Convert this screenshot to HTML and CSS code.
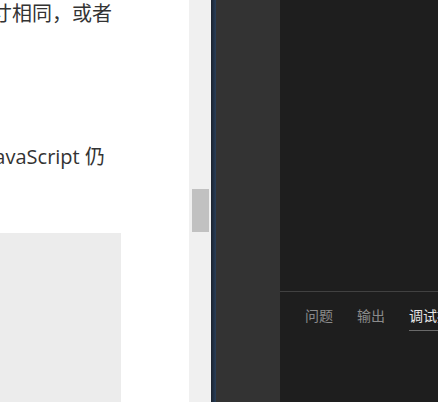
FILE: index.html
```html
<!DOCTYPE html>
<html lang="zh">
<head>
<meta charset="utf-8">
<link rel="stylesheet" href="styles.css">
</head>
<body>
<div class="app">
  <div class="doc">
    <p class="line line-1">尺寸相同，或者</p>
    <p class="line line-2">JavaScript 仍</p>
    <div class="code-box"></div>
  </div>
  <div class="scrollbar"><div class="thumb"></div></div>
  <div class="divider"></div>
  <div class="activity"></div>
  <div class="editor">
    <div class="editor-area"></div>
    <div class="panel">
      <div class="tabs">
        <span class="tab">问题</span>
        <span class="tab">输出</span>
        <span class="tab active">调试控制台</span>
      </div>
    </div>
  </div>
</div>
</body>
</html>
```

FILE: styles.css
```css
html, body {
  margin: 0;
  padding: 0;
  width: 438px;
  height: 402px;
  overflow: hidden;
}
.app {
  display: flex;
  height: 402px;
  width: 438px;
}
.doc {
  width: 189px;
  flex: none;
  background: #ffffff;
  overflow: hidden;
  display: flex;
  flex-direction: column;
  font-family: "Open Sans", "Noto Sans CJK SC", sans-serif;
  font-size: 20px;
  color: #333333;
}
.line {
  margin: 0;
  white-space: nowrap;
  line-height: 28px;
}
.line-1 {
  margin-left: -28px;
  margin-top: 0;
}
.line-2 {
  margin-left: -11px;
  margin-top: 115px;
}
.code-box {
  margin-top: 62px;
  width: 121px;
  flex: 1;
  background: #ececec;
}
.scrollbar {
  width: 22px;
  flex: none;
  background: #f0f0f0;
  display: flex;
  flex-direction: column;
  align-items: center;
}
.thumb {
  margin-top: 189px;
  width: 17px;
  height: 43px;
  background: #c1c1c1;
}
.divider {
  width: 5px;
  flex: none;
  background: linear-gradient(to right, #1b222c, #23344a 60%, #2a3f58);
}
.activity {
  width: 64px;
  flex: none;
  background: #333333;
}
.editor {
  flex: 1;
  background: #1e1e1e;
  display: flex;
  flex-direction: column;
  overflow: hidden;
}
.editor-area {
  height: 291px;
  flex: none;
}
.panel {
  flex: 1;
  border-top: 1px solid #414141;
}
.tabs {
  display: flex;
  gap: 24px;
  padding: 14px 0 0 25px;
  font-family: "Noto Sans CJK SC", sans-serif;
  font-size: 14px;
  white-space: nowrap;
}
.tab {
  color: #8b8b8b;
  line-height: 18px;
  padding-bottom: 6px;
}
.tab.active {
  color: #e7e7e7;
  border-bottom: 1px solid #6a6a6a;
}
```
